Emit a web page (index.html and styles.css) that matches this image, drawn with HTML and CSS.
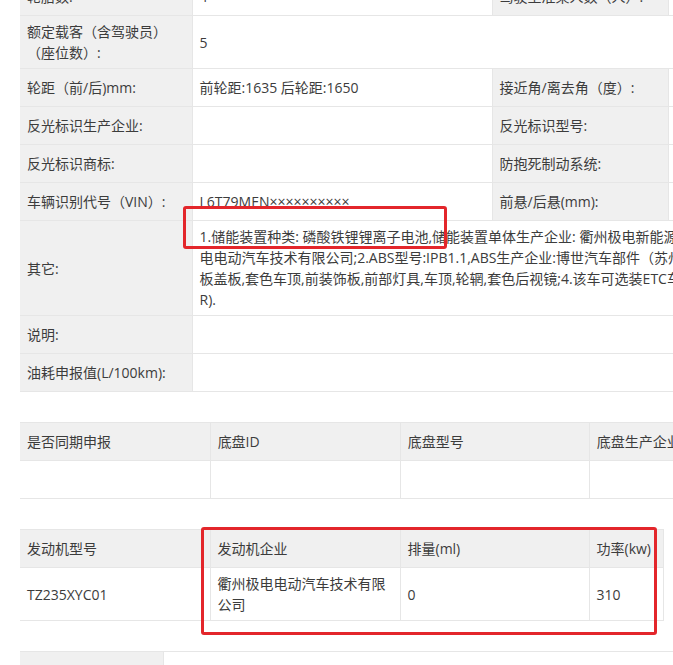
FILE: index.html
```html
<!DOCTYPE html>
<html lang="zh-CN">
<head>
    <meta charset="UTF-8">
    <meta name="viewport" content="width=device-width, initial-scale=1.0">
    <title>车辆参数</title>
    <link rel="stylesheet" href="styles.css">
</head>
<body>

<div class="page">
    <!-- 基本参数 -->
    <table class="params">
        <colgroup>
            <col style="width:172px">
            <col style="width:300px">
            <col style="width:176px">
            <col style="width:200px">
        </colgroup>
        <tr>
            <td class="label">轮胎数:</td>
            <td>4</td>
            <td class="label">驾驶室准乘人数（人）:</td>
            <td>2</td>
        </tr>
        <tr>
            <td class="label">额定载客（含驾驶员）（座位数）:</td>
            <td colspan="3">5</td>
        </tr>
        <tr>
            <td class="label">轮距（前/后)mm:</td>
            <td>前轮距:1635 后轮距:1650</td>
            <td class="label">接近角/离去角（度）:</td>
            <td>19/22</td>
        </tr>
        <tr>
            <td class="label">反光标识生产企业:</td>
            <td></td>
            <td class="label">反光标识型号:</td>
            <td></td>
        </tr>
        <tr>
            <td class="label">反光标识商标:</td>
            <td></td>
            <td class="label">防抱死制动系统:</td>
            <td>有</td>
        </tr>
        <tr>
            <td class="label">车辆识别代号（VIN）:</td>
            <td>L6T79MEN××××××××××</td>
            <td class="label">前悬/后悬(mm):</td>
            <td class="orange">877/1045</td>
        </tr>
        <tr>
            <td class="label">其它:</td>
            <td colspan="3">1.储能装置种类: 磷酸铁锂锂离子电池,储能装置单体生产企业: 衢州极电新能源科技有限公司;储能装置总成生产企业: 衢州极<br>电电动汽车技术有限公司;2.ABS型号:IPB1.1,ABS生产企业:博世汽车部件（苏州）有限公司;3.选装前保险杠,侧围<br>板盖板,套色车顶,前装饰板,前部灯具,车顶,轮辋,套色后视镜;4.该车可选装ETC车载单元(OBU),行车记录仪(DV<br>R).</td>
        </tr>
        <tr>
            <td class="label">说明:</td>
            <td colspan="3"></td>
        </tr>
        <tr>
            <td class="label">油耗申报值(L/100km):</td>
            <td colspan="3"></td>
        </tr>
    </table>

    <!-- 底盘 -->
    <table class="grid">
        <colgroup>
            <col style="width:190px">
            <col style="width:190px">
            <col style="width:189px">
            <col style="width:190px">
        </colgroup>
        <tr class="head">
            <td>是否同期申报</td>
            <td>底盘ID</td>
            <td>底盘型号</td>
            <td>底盘生产企业</td>
        </tr>
        <tr>
            <td></td>
            <td></td>
            <td></td>
            <td></td>
        </tr>
    </table>

    <!-- 发动机 -->
    <table class="grid">
        <colgroup>
            <col style="width:190px">
            <col style="width:190px">
            <col style="width:189px">
            <col style="width:74px">
            <col style="width:120px">
        </colgroup>
        <tr class="head">
            <td>发动机型号</td>
            <td>发动机企业</td>
            <td>排量(ml)</td>
            <td>功率(kw)</td>
            <td class="blank"></td>
        </tr>
        <tr>
            <td>TZ235XYC01</td>
            <td>衢州极电电动汽车技术有限<br>公司</td>
            <td>0</td>
            <td>310</td>
            <td class="blank"></td>
        </tr>
    </table>

    <!-- 其它 -->
    <table class="grid">
        <colgroup>
            <col style="width:143px">
            <col style="width:620px">
        </colgroup>
        <tr class="tall">
            <td class="label">燃料种类</td>
            <td>纯电动</td>
        </tr>
    </table>

    <!-- 标注框 -->
    <div class="mark mark-battery"></div>
    <div class="mark mark-engine"></div>
</div>

</body>
</html>
```

FILE: styles.css
```css
html, body {
    margin: 0;
    padding: 0;
    overflow: hidden;
    background-color: #fff;
}

body {
    font-family: "Open Sans", "Noto Sans CJK SC", sans-serif;
    font-size: 14px;
    color: #3c3c3c;
}

.page {
    position: relative;
    padding-left: 20px;
    margin-top: -23px;
}

table {
    border-collapse: collapse;
    table-layout: fixed;
}

td {
    border: 1px solid #e6e6e6;
    padding: 5px 7px;
    line-height: 21px;
    height: 27px;
    vertical-align: middle;
    text-align: left;
    white-space: nowrap;
    overflow: hidden;
}

.label {
    background-color: #f0f0f0;
    white-space: normal;
}

.params {
    width: 848px;
}

.params td:first-child {
    border-left: none;
}

.orange {
    color: #d9822b;
}

.grid {
    width: 760px;
    margin-top: 30px;
}

.grid .head td {
    background-color: #f0f0f0;
}

.grid .head td.blank,
.grid td.blank {
    background-color: #fff;
    border: none;
}

.grid td:first-child {
    border-left: none;
}

.grid .tall td {
    height: 60px;
}

.mark {
    position: absolute;
    border: 3px solid #e3262b;
    border-radius: 3px;
}

.mark-battery {
    left: 183px;
    top: 229px;
    width: 258px;
    height: 37px;
}

.mark-engine {
    left: 201px;
    top: 550px;
    width: 450px;
    height: 102px;
}
```
